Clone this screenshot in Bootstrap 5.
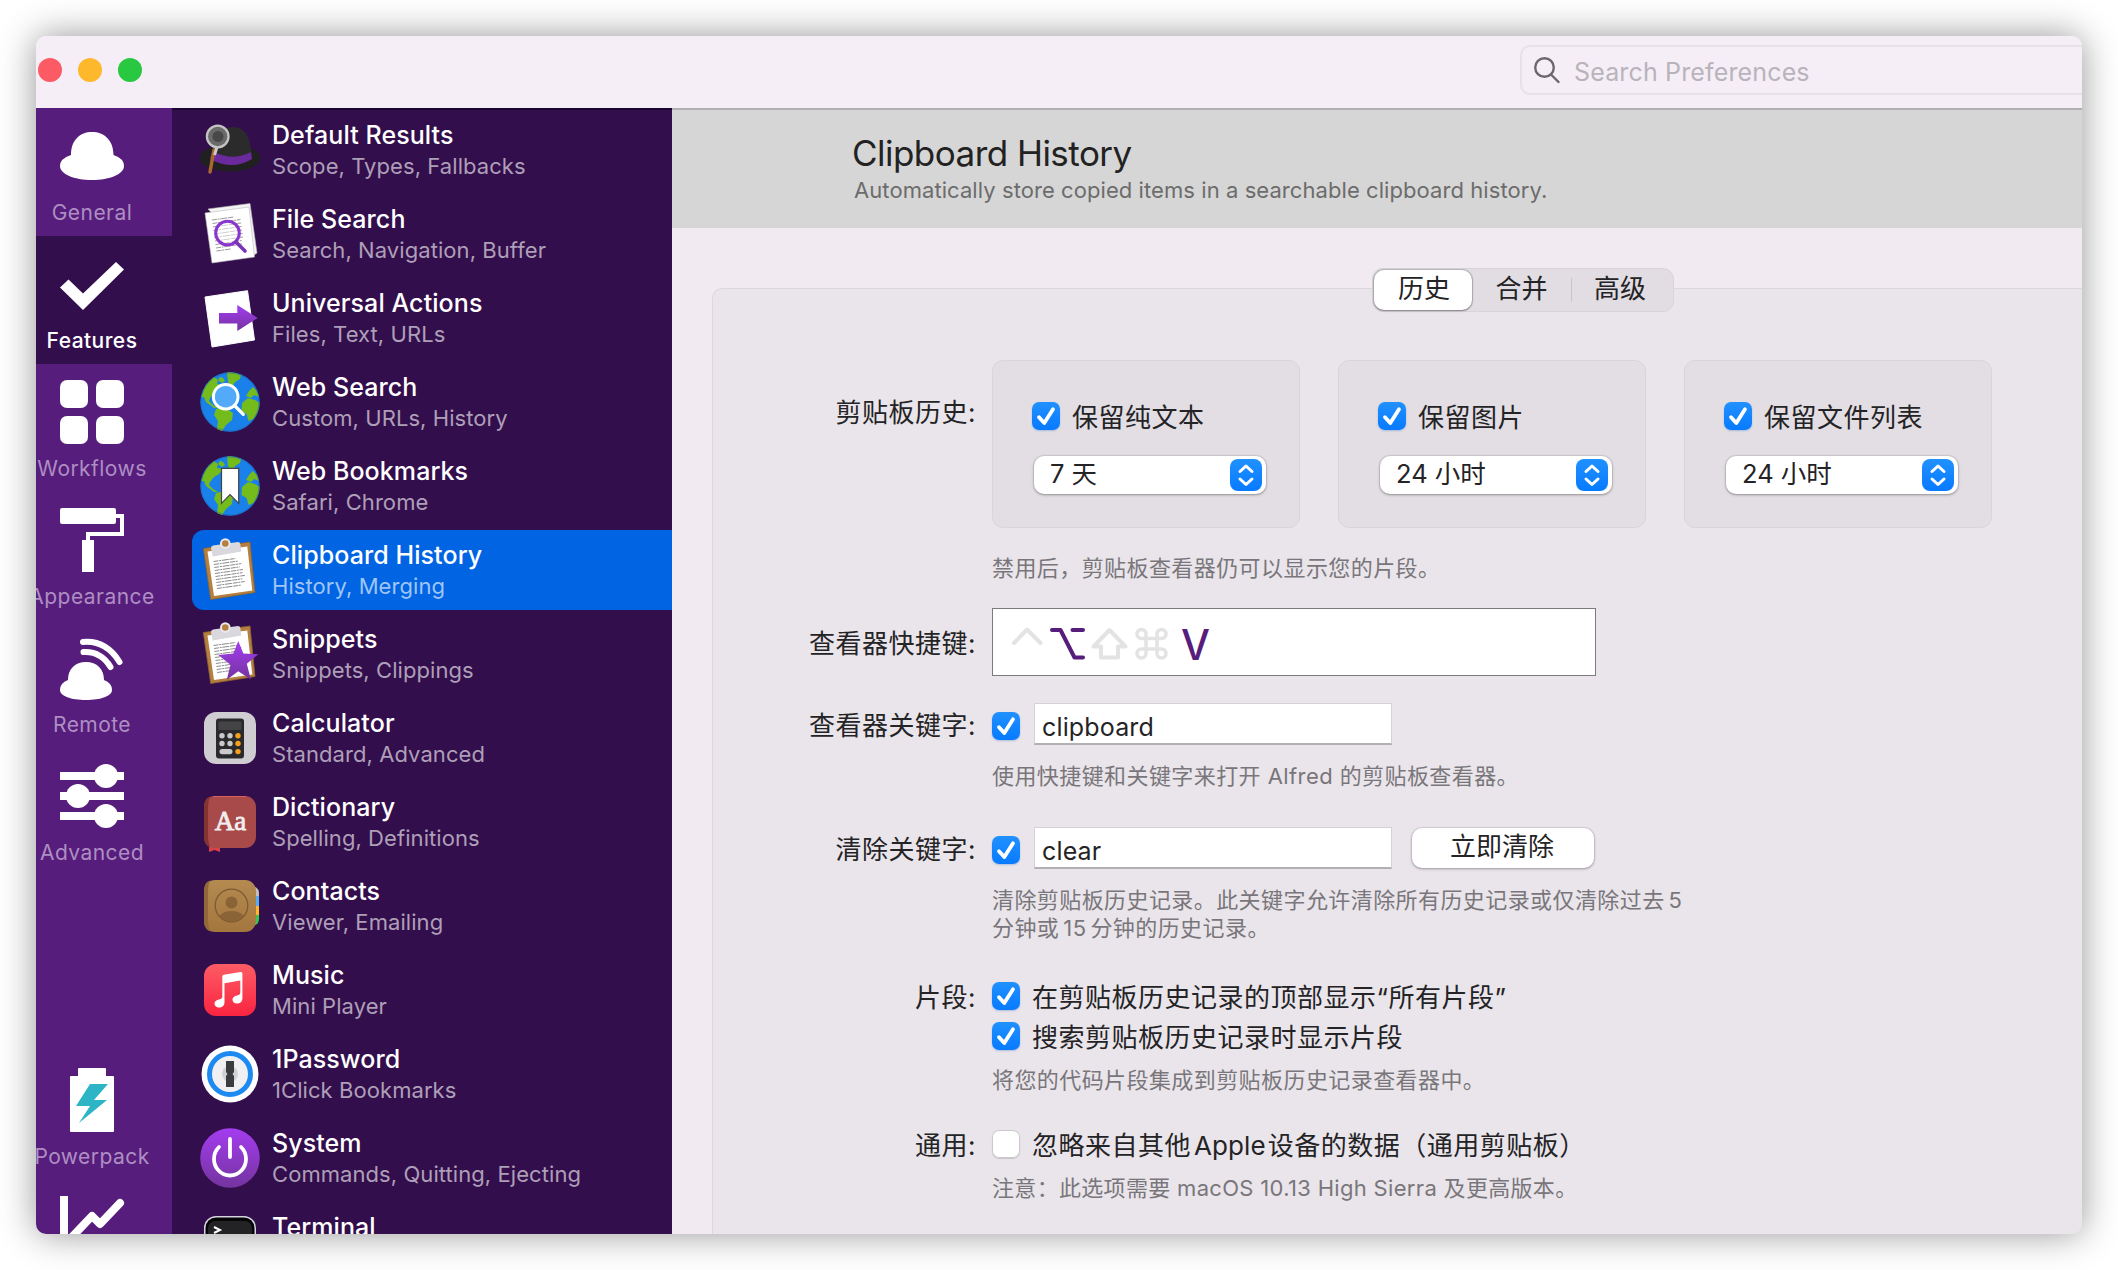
<!DOCTYPE html>
<html lang="zh-CN">
<head>
<meta charset="utf-8">
<title>Alfred Preferences</title>
<link href="https://cdn.jsdelivr.net/npm/bootstrap@5.3.0/dist/css/bootstrap.min.css" rel="stylesheet">
<style>
body{background:#fff;font-family:Inter,"Noto Sans CJK SC",sans-serif;color:#242326;padding:36px;height:1270px;overflow:hidden}
.app-window{width:2046px;height:1198px;border-radius:10px;box-shadow:0 0 36px rgba(0,0,0,.42);background:#f1eaf1}
.titlebar{height:72px;background:#f5eef6;padding-left:2px}
.lights{gap:16px;padding-bottom:4px}
.light{width:24px;height:24px;border-radius:50%;background:#fc5b66}
.light.amber{background:#fdb82c}
.light.green{background:#28c840}
.search-box{width:562px;height:50px;margin:9px 0 0;border:2px solid #e8e1ea;border-right:0;border-radius:10px 0 0 10px;padding-left:12px;color:#b9b3bb;font-size:25px;letter-spacing:.15px}
.search-box svg{margin-right:14px}
.search-box span{padding-top:5px}
.nav-rail{width:136px;background:#561d7d}
.rail-item{height:128px;padding:16px 24px 0 0;color:#ae8ec2;font-size:21px;line-height:30px;letter-spacing:.45px;white-space:nowrap;flex:none}
.rail-item svg{width:64px;height:64px;display:block;fill:#fff;flex:none;overflow:visible}
.rail-item span{margin-top:10px}
.rail-item.active{background:#330e4c;color:#fff;font-weight:500}
.rail-gap{margin-top:176px}
.feature-list{width:500px;background:#330e4c;padding:2px 0 0 20px;box-shadow:inset 0 2px 0 #1b0630}
.feature{height:80px;margin-bottom:4px;flex:none;padding-left:8px;border-radius:12px 0 0 12px}
.feature svg{width:60px;height:60px;overflow:visible;flex:none;margin-right:12px}
.feature b{display:block;font-weight:500;font-size:25px;line-height:32px;letter-spacing:.08px;color:#fff}
.feature small{display:block;font-size:22px;line-height:30px;letter-spacing:.07px;color:#ae9fb8}
.feature.active{background:#0064e3}
.feature.active small{color:#9fc5f6}
.pane-head{height:120px;background:#d6d6d6;border-top:2px solid #b2afb3;padding:20px 0 0 180px}
.pane-head h1{font-size:35px;line-height:46px;font-weight:400;margin:0;color:#222;letter-spacing:-.53px}
.pane-head p{font-size:22px;line-height:28px;margin:0 0 0 2px;color:#6c6c6c;letter-spacing:.07px}
.panel{margin:60px 0 0 40px;height:960px;background:#e9e5ea;border:1px solid #dcd8de;border-right:0;border-radius:10px 0 0 0}
.seg{width:302px;height:44px;margin:-21px 0 48px 659px;border-radius:11px;background:#e1dde2;border:1px solid #d8d4d9;font-size:26px}
.seg div{height:40px;line-height:38px;text-align:center;width:99px}
.seg .on{width:98px;margin-left:1px;padding-left:2px;background:#fff;border-radius:10px;box-shadow:0 0 1px 1px rgba(0,0,0,.18),0 1px 2px rgba(0,0,0,.3)}
.seg span{width:1px;height:24px;background:#c8c4c9}
.seg span+div{padding-right:3px}
.lbl{width:263px;text-align:right;margin-right:16px;font-size:26px;letter-spacing:.5px;line-height:28px;flex:none;white-space:nowrap;position:relative;top:2px}
.lbl-top{padding-top:37px}
.opt-card{width:308px;height:168px;margin-right:38px;background:#e2dee3;border:1px solid #d9d5da;border-radius:11px;padding:41px 0 0 39px}
.chk{width:28px;height:28px;border-radius:7px;background:linear-gradient(#2191ff,#077aff);flex:none;box-shadow:0 1px 2px rgba(0,80,200,.25)}
.chk.low{margin-top:4px}
.chk.off{background:#fff;box-shadow:0 0 0 1px #cbc7cc inset,0 1px 1px rgba(0,0,0,.15)}
.chk svg{width:28px;height:28px;display:block}
.txt{font-size:26px;letter-spacing:.5px;line-height:28px;white-space:nowrap;margin-left:12px;position:relative;top:2px}
.tight{margin:0 4px}
.txt .tight{margin:0 2px 0 3px;letter-spacing:.1px}
.popup{width:232px;height:38px;border-radius:10px;background:#fff;box-shadow:0 0 1px 1px rgba(0,0,0,.08),0 1px 3px rgba(0,0,0,.3);margin:26px 0 0 2px;padding:0 4px 0 16px;font-size:25.500px}
.popup span{padding-bottom:2px}
.popup svg{width:32px;height:32px}
.hint{margin-left:279px;font-size:22px;letter-spacing:.42px;line-height:28px;color:#79767b;white-space:nowrap}
.hint.snug{letter-spacing:.32px}
.keybox{width:604px;height:68px;background:#fff;border:1.5px solid #7d7a7e;padding-left:18px}
.keybox svg{overflow:visible}
.field{width:358px;height:42px;margin-left:14px;background:#fff;border:1px solid #d5d1d6;border-bottom:2px solid #b3b0b4;padding-left:7px;font-size:25px;line-height:46px;letter-spacing:.15px}
.push{width:182px;height:40px;margin-left:20px;border-radius:10px;background:#fff;box-shadow:0 0 1px 1px rgba(0,0,0,.07),0 1px 3px rgba(0,0,0,.3);font-size:26px;line-height:37px;text-align:center;padding-right:2px}
.mt-12{margin-top:12px}.mt-16{margin-top:16px}.mt-17{margin-top:17px}.mt-26{margin-top:26px}.mt-27{margin-top:27px}.mt-36{margin-top:36px}.mt-37{margin-top:37px}.mt-40{margin-top:40px}
</style>
</head>
<body>
<svg width="0" height="0" class="position-absolute">
<defs>
<linearGradient id="gp" x1="0" y1="0" x2="0" y2="1"><stop offset="0" stop-color="#a43cf0"/><stop offset="1" stop-color="#74349f"/></linearGradient>
<linearGradient id="gm" x1="0" y1="0" x2="0" y2="1"><stop offset="0" stop-color="#fc5c65"/><stop offset="1" stop-color="#fa2440"/></linearGradient>
<linearGradient id="gb" x1="0" y1="0" x2="0" y2="1"><stop offset="0" stop-color="#2191ff"/><stop offset="1" stop-color="#077aff"/></linearGradient>
<linearGradient id="gc" x1="0" y1="0" x2="0" y2="1"><stop offset="0" stop-color="#b48a50"/><stop offset="1" stop-color="#a3763d"/></linearGradient>
<symbol id="check" viewBox="0 0 28 28"><path d="M7 15.200 12.300 21 21 7.300" fill="none" stroke="#fff" stroke-width="3.800" stroke-linecap="round" stroke-linejoin="round"/></symbol>
<symbol id="updown" viewBox="0 0 32 32"><rect width="32" height="32" rx="8" fill="url(#gb)"/><path d="M10 12.500 16 7l6 5.500M10 20l6 5.500 6-5.500" fill="none" stroke="#fff" stroke-width="3" stroke-linecap="round" stroke-linejoin="round"/></symbol>
<symbol id="globe" viewBox="0 0 60 60"><circle cx="30" cy="30" r="29.700" fill="#1a80ea"/><g fill="#74bb1c"><path d="M1.500 25Q4 12 14 5l4 3-1 4 6 1-4 5-5 3-4 5-1 3 4 4 5 3-4 0-8-6-2-5z"/><path d="M16 37l8-2 9 6-1 7-6 5-4 6-5-2 1-8-4-6z"/><path d="M27 .500Q34-.500 41 3l-1 4-5 3-3 5-4-5zM18 8l2-3 3 1 2 3-3 2zM46 24l3-5 4-4 4 4 2 6-5-2-3 3zM42 31l6-5 7 2 4.500 3q0 9-6 16l-5 2-2-7-5-3z"/></g><circle cx="30" cy="30" r="29" fill="none" stroke="#1a62a8" stroke-opacity=".5"/></symbol>
<symbol id="board" viewBox="0 0 60 60" overflow="visible"><path d="M3.300 8.500 50 2l5 50.500-44.300 7z" fill="#b5803f" stroke="#8d6230" stroke-width=".8"/><path d="M7.500 11.500 47.300 6.500l5 44L14 56z" fill="#fff"/><path d="M13.500 21.500l22-3M14 24.500l24-3.400M14.300 27.500l27-3.900M14.700 30.500l25-3.600M15 33.500l28-4M15.500 36.500l27-3.900M15.900 39.500l29-4.100M16.300 42.500l26-3.700M16.700 45.500l28-4M17.100 48.500l24-3.400" stroke="#8a8a8a" stroke-width="1" stroke-dasharray="5 .7 2 .7 7 .8"/><path d="M11 8q0-2 2-2.500L38 2q2 0 2.300 2l1 7.500L12.700 16.500z" fill="#d8d8de"/><circle cx="25.300" cy="3.500" r="4.300" fill="#b5803f" stroke="#e9e9ee" stroke-width="2"/></symbol>
</defs>
</svg>
<div class="app-window overflow-hidden d-flex flex-column">
  <header class="titlebar d-flex justify-content-between flex-shrink-0">
    <div class="lights d-flex align-items-center">
      <span class="light"></span><span class="light amber"></span><span class="light green"></span>
    </div>
    <div class="search-box d-flex align-items-center">
      <svg width="26" height="28" viewBox="0 0 26 28" fill="none" stroke="#6b676d" stroke-width="2.400" stroke-linecap="round"><circle cx="10.500" cy="11.500" r="9.300"/><path d="M17.500 19 24.500 26"/></svg><span>Search Preferences</span>
    </div>
  </header>
  <div class="d-flex flex-grow-1 overflow-hidden">
    <nav class="nav-rail d-flex flex-column flex-shrink-0">
      <div class="rail-item d-flex flex-column align-items-center"><svg viewBox="0 0 64 64"><path d="M11 31C11 16 20 8 32 8s21.500 8 21.500 23q10.500 3.500 10.500 11C64 50 50 56 32 56S0 50 0 42q0-7.500 11-11z"/></svg><span>General</span></div>
      <div class="rail-item active d-flex flex-column align-items-center"><svg viewBox="0 0 64 64"><path d="M0 35.500 8.500 27.500 23 41.500 56 10l8 7.500L23 58z"/></svg><span>Features</span></div>
      <div class="rail-item d-flex flex-column align-items-center"><svg viewBox="0 0 64 64"><rect width="28" height="28" rx="7"/><rect x="36" width="28" height="28" rx="7"/><rect y="36" width="28" height="28" rx="7"/><rect x="36" y="36" width="28" height="28" rx="7"/></svg><span>Workflows</span></div>
      <div class="rail-item d-flex flex-column align-items-center"><svg viewBox="0 0 64 64"><rect width="56" height="16" rx="2"/><path d="M56 8h6v18H28v7" fill="none" stroke="#fff" stroke-width="4"/><path d="M22 32h12v32H22z"/></svg><span>Appearance</span></div>
      <div class="rail-item d-flex flex-column align-items-center"><svg viewBox="0 0 64 64"><path d="M8 44c0-11 7-18 18-18s18 7 18 18q8 3 8 10c0 6-11 10-26 10S0 60 0 54q0-7 8-10z"/><path d="M23 6Q46 4 59.500 26M23.500 16Q41 15 50.500 31" fill="none" stroke="#fff" stroke-width="6" stroke-linecap="round"/></svg><span>Remote</span></div>
      <div class="rail-item d-flex flex-column align-items-center"><svg viewBox="0 0 64 64"><path d="M0 8h64v8H0zM0 28h64v8H0zM0 48h64v8H0z"/><circle cx="46" cy="12" r="12"/><circle cx="18" cy="32" r="12"/><circle cx="46" cy="52" r="12"/></svg><span>Advanced</span></div>
      <div class="rail-item rail-gap d-flex flex-column align-items-center"><svg viewBox="0 0 64 64"><path d="M10 9q0-1 1-1h7V1q0-1 1-1h26q1 0 1 1v7h7q1 0 1 1v54q0 1-1 1H11q-1 0-1-1z"/><path d="M30 16h18L34 32h13L19 55l11-17H16z" fill="#2db5c5"/></svg><span>Powerpack</span></div>
      <div class="rail-item d-flex flex-column align-items-center"><svg viewBox="0 0 64 64"><path d="M0 0h8v64H0z"/><path d="M11 42 32 20l8 8L60 7" fill="none" stroke="#fff" stroke-width="8" stroke-linecap="round" stroke-linejoin="round"/></svg></div>
    </nav>
    <aside class="feature-list d-flex flex-column flex-shrink-0">
      <div class="feature d-flex align-items-center"><svg viewBox="0 0 60 60"><ellipse cx="30" cy="38" rx="30.500" ry="13.500" fill="#202020"/><path d="M12 37C14 18 19 7 33 7s18 14 18.500 30Q32 49 12 37z" fill="#2b2b2b"/><path d="M12.500 31Q32 42 51 32l1 7Q32 51 10 39z" fill="#6a2a9c"/><path d="M14 30 10 52" stroke="#a8672c" stroke-width="3.500" stroke-linecap="round"/><path d="M17 27 14.500 35" stroke="#ccc" stroke-width="3"/><circle cx="17.700" cy="16.500" r="10.800" fill="#6a6a6a" stroke="#c4c4c4" stroke-width="2.300"/><circle cx="18" cy="16.500" r="5.500" fill="#484848"/></svg><div><b>Default Results</b><small>Scope, Types, Fallbacks</small></div></div>
      <div class="feature d-flex align-items-center"><svg viewBox="0 0 60 60"><path d="M8 5 50-.500 57 49l-6 4z" fill="#f4f4f4" stroke="#bbb" stroke-width=".6"/><path d="M5 9 49 3l5.500 50L12 59z" fill="#fff" stroke="#bbb" stroke-width=".6"/><path d="M12 16l22-3M12.500 19.500l28-4M13 23l28-4M13.500 26.500l28-4M14 30l28-4M14.500 33.500l28-4M15 37l28-4M15.500 40.500l26-4M16 44l26-4M16.500 47l14-2" stroke="#999" stroke-width="1" stroke-dasharray="5 .7 2 .7 7 .8"/><circle cx="27.500" cy="29" r="11.800" fill="#fff" fill-opacity=".5" stroke="#8b35cf" stroke-width="3"/><path d="M36 38l9 9" stroke="#7a32b8" stroke-width="3.600" stroke-linecap="round"/></svg><div><b>File Search</b><small>Search, Navigation, Buffer</small></div></div>
      <div class="feature d-flex align-items-center"><svg viewBox="0 0 60 60"><path d="M5 9 47.500 2.700 54.500 52 12 59z" fill="#fff" stroke="#fff" stroke-linejoin="round"/><path d="M19 25h18.300v-8L57.700 30 37.300 43v-7.500H19z" fill="url(#gp)"/></svg><div><b>Universal Actions</b><small>Files, Text, URLs</small></div></div>
      <div class="feature d-flex align-items-center"><svg viewBox="0 0 60 60"><use href="#globe"/><circle cx="25.700" cy="24.700" r="12.300" fill="#52aaf8" stroke="#fff" stroke-width="3"/><path d="M34.500 33.500l8.800 8.800" stroke="#fff" stroke-width="3.300" stroke-linecap="round"/></svg><div><b>Web Search</b><small>Custom, URLs, History</small></div></div>
      <div class="feature d-flex align-items-center"><svg viewBox="0 0 60 60"><use href="#globe"/><path d="M21.500 12.300h17.200v35L30 38.500l-8.500 8.800z" fill="#fff" stroke="#444" stroke-width="1.200"/></svg><div><b>Web Bookmarks</b><small>Safari, Chrome</small></div></div>
      <div class="feature active d-flex align-items-center"><svg viewBox="0 0 60 60"><use href="#board"/></svg><div><b>Clipboard History</b><small>History, Merging</small></div></div>
      <div class="feature d-flex align-items-center"><svg viewBox="0 0 60 60"><use href="#board"/><path d="M38.300 17l5 12.500 15 .800-11.500 9.500 4 15.800-12.500-8.300-11.500 8.500 3.700-15L18.300 31l15-1.500z" fill="url(#gp)"/></svg><div><b>Snippets</b><small>Snippets, Clippings</small></div></div>
      <div class="feature d-flex align-items-center"><svg viewBox="0 0 60 60"><rect x="4" y="4" width="52" height="52" rx="12" fill="#cfccd2"/><rect x="16" y="10.500" width="28" height="40" rx="3" fill="#2a2a2c"/><rect x="18.500" y="13.500" width="23" height="8.500" rx="1" fill="#444447"/><g fill="#c9c9cb"><circle cx="22" cy="27.700" r="2.700"/><circle cx="30" cy="27.700" r="2.700"/><circle cx="22" cy="35.500" r="2.700"/><circle cx="30" cy="35.500" r="2.700"/><rect x="19.500" y="41" width="13" height="5.200" rx="2.600"/></g><g fill="#f8a01c"><circle cx="38" cy="27.700" r="2.700"/><circle cx="38" cy="35.500" r="2.700"/><circle cx="38" cy="43.600" r="2.700"/></g></svg><div><b>Calculator</b><small>Standard, Advanced</small></div></div>
      <div class="feature d-flex align-items-center"><svg viewBox="0 0 60 60"><path d="M9 54h11v6l-5.500-2L9 60z" fill="#d8414a"/><rect x="4" y="4" width="52" height="52" rx="11" fill="#a84a49"/><path d="M10 4.500Q4 6 4 15v30q0 8 6 10.500Q8 50 8 45V15Q8 9 10 4.500z" fill="#833331"/><path d="M13 4.500h33" stroke="#d8605d" stroke-width="1.200"/><text x="30.500" y="38" text-anchor="middle" font-family="Liberation Serif" font-weight="400" font-size="27" fill="#f2eeee" stroke="#f2eeee" stroke-width=".8">Aa</text></svg><div><b>Dictionary</b><small>Spelling, Definitions</small></div></div>
      <div class="feature d-flex align-items-center"><svg viewBox="0 0 60 60"><path d="M52 10q7 1 7 7v3h-7z" fill="#c4c0bd"/><path d="M52 20h7v10h-7z" fill="#55aef2"/><path d="M52 30h7v9h-7z" fill="#fdb62d"/><path d="M52 39h7v4q0 6-7 7z" fill="#3bc353"/><rect x="4" y="4" width="52" height="52" rx="11" fill="url(#gc)"/><path d="M10 4.500Q4 6 4 15v30q0 8 6 10.500Q8 50 8 45V15Q8 9 10 4.500z" fill="#91683a"/><circle cx="31.500" cy="29.500" r="16.300" fill="none" stroke="#7d5a30" stroke-width="1.300"/><circle cx="31.500" cy="26.500" r="6" fill="#8a6436"/><path d="M19.500 40q4-5 12-5t12 5q-4.500 5-12 5t-12-5z" fill="#8a6436"/></svg><div><b>Contacts</b><small>Viewer, Emailing</small></div></div>
      <div class="feature d-flex align-items-center"><svg viewBox="0 0 60 60"><rect x="4" y="4" width="52" height="52" rx="12" fill="url(#gm)"/><path d="M22.300 16.500q0-1.500 1.500-1.800L40.500 12q1.900-.300 1.900 1.500V38c0 4-2.500 5.500-5.500 5.500s-4.400-2-4.400-3.800c0-2.400 1.800-3.700 4.500-4.200 2.300-.500 3.300-.900 3.300-3V20.500L24.500 23.300V42c0 4-2.500 5.500-5.500 5.500s-4.500-2-4.500-3.800c0-2.400 1.900-3.700 4.500-4.200 2.300-.500 3.300-.900 3.300-3z" fill="#fff"/></svg><div><b>Music</b><small>Mini Player</small></div></div>
      <div class="feature d-flex align-items-center"><svg viewBox="0 0 60 60"><circle cx="30" cy="30" r="28.500" fill="#fff"/><circle cx="30" cy="30" r="20.500" fill="#f0f0f2" stroke="#1d8af2" stroke-width="5"/><circle cx="30" cy="30" r="8" fill="#d2d2d6"/><path d="M26 17h8v11l-1.500 2 1.500 2v11h-8V32l1.500-2-1.500-2z" fill="#3a3c3e"/></svg><div><b>1Password</b><small>1Click Bookmarks</small></div></div>
      <div class="feature d-flex align-items-center"><svg viewBox="0 0 60 60"><circle cx="30" cy="30" r="29.800" fill="url(#gp)"/><path d="M30 11v18M19 19a16 16.500 0 1 0 22 0" fill="none" stroke="#fff" stroke-width="3.800" stroke-linecap="round"/></svg><div><b>System</b><small>Commands, Quitting, Ejecting</small></div></div>
      <div class="feature d-flex align-items-center"><svg viewBox="0 0 60 60"><rect x="4" y="4" width="52" height="52" rx="12" fill="#d5d5e0"/><rect x="5.500" y="5.500" width="49" height="49" rx="10.500" fill="#050505"/><rect x="8" y="9" width="44" height="44" rx="7" fill="#232325"/><path d="M14 15l6 3-6 3" fill="none" stroke="#fff" stroke-width="2"/></svg><div><b>Terminal</b><small>&nbsp;</small></div></div>
    </aside>
    <main class="flex-grow-1 overflow-hidden">
      <div class="pane-head"><h1>Clipboard History</h1><p>Automatically store copied items in a searchable clipboard history.</p></div>
      <section class="panel">
        <div class="seg d-flex align-items-center"><div class="on">历史</div><div>合并</div><span></span><div>高级</div></div>
        <div class="d-flex"><div class="lbl lbl-top">剪贴板历史:</div>
          <div class="opt-card"><div class="d-flex"><span class="chk"><svg><use href="#check"/></svg></span><span class="txt">保留纯文本</span></div><div class="popup d-flex align-items-center justify-content-between"><span>7 天</span><svg><use href="#updown"/></svg></div></div>
          <div class="opt-card"><div class="d-flex"><span class="chk"><svg><use href="#check"/></svg></span><span class="txt">保留图片</span></div><div class="popup d-flex align-items-center justify-content-between"><span>24 小时</span><svg><use href="#updown"/></svg></div></div>
          <div class="opt-card"><div class="d-flex"><span class="chk"><svg><use href="#check"/></svg></span><span class="txt">保留文件列表</span></div><div class="popup d-flex align-items-center justify-content-between"><span>24 小时</span><svg><use href="#updown"/></svg></div></div>
        </div>
        <div class="hint mt-26">禁用后，剪贴板查看器仍可以显示您的片段。</div>
        <div class="d-flex align-items-center mt-26"><div class="lbl">查看器快捷键:</div>
          <div class="keybox d-flex align-items-center"><svg width="220" height="40" viewBox="1011 622.500 220 40" fill="none" stroke="#e3e3e3" stroke-width="4" stroke-linecap="round" stroke-linejoin="round"><path d="M1014 643.500 1027 630l13.500 13.500"/><path d="M1052 630.500h8.500l14 27.500h8.500M1072.500 630.500h10.500" stroke="#561d7d"/><path d="M1109.500 630.500 1093.500 647h7.500v11h17v-11h7.500z"/><path d="M1146 639v10.500M1157 639v10.500M1146.500 639h10.500M1146.500 649.500h10.500M1146 639h-4.500a4.500 4.500 0 1 1 4.500-4.500zM1157 639v-4.500a4.500 4.500 0 1 1 4.500 4.500zM1146 649.500v4.500a4.500 4.500 0 1 1-4.500-4.500zM1157 649.500h4.500a4.500 4.500 0 1 1-4.500 4.500z" stroke-width="3.500"/><text x="1181" y="660" font-size="43" textLength="29" lengthAdjust="spacingAndGlyphs" fill="#561d7d" stroke="none" font-weight="450">V</text></svg></div></div>
        <div class="d-flex align-items-center mt-27"><div class="lbl">查看器关键字:</div><span class="chk low"><svg><use href="#check"/></svg></span><div class="field">clipboard</div></div>
        <div class="hint mt-17">使用快捷键和关键字来打开 Alfred 的剪贴板查看器。</div>
        <div class="d-flex align-items-center mt-37"><div class="lbl">清除关键字:</div><span class="chk low"><svg><use href="#check"/></svg></span><div class="field">clear</div><div class="push">立即清除</div></div>
        <div class="hint mt-17">清除剪贴板历史记录。此关键字允许清除所有历史记录或仅清除过去<span class="tight">5</span><br>分钟或<span class="tight">15</span>分钟的历史记录。</div>
        <div class="d-flex align-items-center mt-40"><div class="lbl">片段:</div><span class="chk"><svg><use href="#check"/></svg></span><span class="txt">在剪贴板历史记录的顶部显示“所有片段”</span></div>
        <div class="d-flex align-items-center mt-12"><div class="lbl"></div><span class="chk"><svg><use href="#check"/></svg></span><span class="txt">搜索剪贴板历史记录时显示片段</span></div>
        <div class="hint mt-16">将您的代码片段集成到剪贴板历史记录查看器中。</div>
        <div class="d-flex align-items-center mt-36"><div class="lbl">通用:</div><span class="chk off"></span><span class="txt">忽略来自其他<span class="tight">Apple</span>设备的数据（通用剪贴板）</span></div>
        <div class="hint snug mt-16">注意：此选项需要 macOS 10.13 High Sierra 及更高版本。</div>
      </section>
    </main>
  </div>
</div>
<script src="https://cdn.jsdelivr.net/npm/bootstrap@5.3.0/dist/js/bootstrap.bundle.min.js"></script>
</body>
</html>
